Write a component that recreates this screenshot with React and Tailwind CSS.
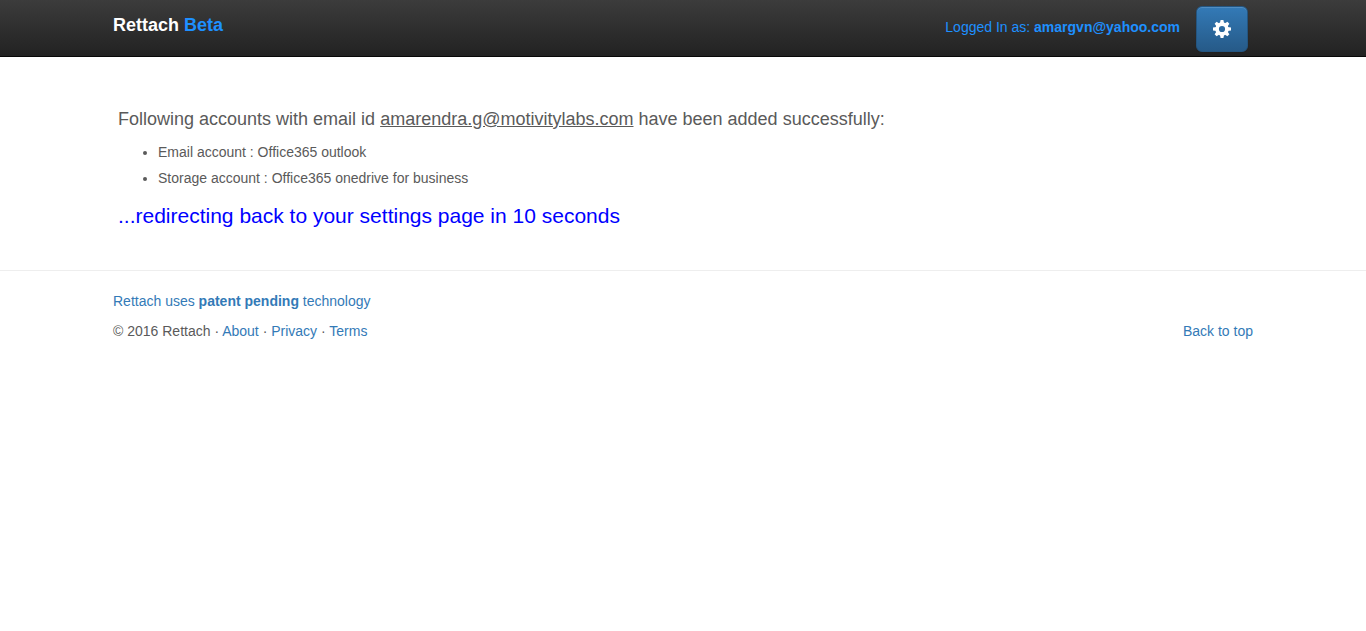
const TOOTH_ANGLES = [0, 45, 90, 135, 180, 225, 270, 315];

function GearIcon() {
  return (
    <svg viewBox="0 0 18 18" className="size-[18px]" fill="currentColor" aria-hidden="true">
      <circle cx="9" cy="9" r="4.9" fill="none" stroke="currentColor" strokeWidth="3.6" />
      {TOOTH_ANGLES.map((angle) => (
        <path key={angle} transform={`rotate(${angle} 9 9)`} d="M6.9 3.6 7.6 0h2.8l.7 3.6z" />
      ))}
    </svg>
  );
}

export default function App() {
  return (
    <div className="font-['Liberation_Sans',Arial,sans-serif] text-sm text-[#5a5a5a]">
      <header className="border-b border-[#080808] bg-linear-to-b from-[#3c3c3c] to-[#222222]">
        <div className="mx-auto flex h-14 max-w-[1170px] items-start justify-between px-[15px]">
          <a href="#" className="pt-[15px] text-lg leading-5 font-bold text-white">
            Rettach <span className="text-[#1e90ff]">Beta</span>
          </a>
          <div className="flex items-start gap-4 pt-[6px] pr-[5px]">
            <p className="pt-[11px] leading-5 text-[#1e90ff]">
              Logged In as: <strong>amargvn@yahoo.com</strong>
            </p>
            <button
              type="button"
              aria-label="Settings"
              className="flex h-[46px] w-[52px] items-center justify-center rounded-md border border-[#245580] bg-linear-to-b from-[#337ab7] to-[#265a88] text-white shadow-[inset_0_1px_0_rgba(255,255,255,0.15),0_1px_1px_rgba(0,0,0,0.075)]"
            >
              <GearIcon />
            </button>
          </div>
        </div>
      </header>
      <main className="mx-auto max-w-[1170px] px-5 pt-[52px] pb-[43px]">
        <h1 className="text-lg leading-5">
          Following accounts with email id <u>amarendra.g@motivitylabs.com</u> have been added successfully:
        </h1>
        <ul className="mt-[10px] list-disc pl-10 leading-[26px]">
          <li>Email account : Office365 outlook</li>
          <li>Storage account : Office365 onedrive for business</li>
        </ul>
        <p className="mt-[13px] text-[21px] leading-[23px] text-[#0000ff]">
          ...redirecting back to your settings page in 10 seconds
        </p>
      </main>
      <footer className="border-t border-[#eeeeee] pt-5">
        <div className="mx-auto max-w-[1170px] px-[15px] leading-5">
          <p>
            <a href="#" className="text-[#337ab7]">Rettach uses <strong>patent pending</strong> technology</a>
          </p>
          <div className="mt-[10px] flex justify-between">
            <p>
              © 2016 Rettach · <a href="#" className="text-[#337ab7]">About</a> ·{" "}
              <a href="#" className="text-[#337ab7]">Privacy</a> ·{" "}
              <a href="#" className="text-[#337ab7]">Terms</a>
            </p>
            <a href="#" className="text-[#337ab7]">Back to top</a>
          </div>
        </div>
      </footer>
    </div>
  );
}
